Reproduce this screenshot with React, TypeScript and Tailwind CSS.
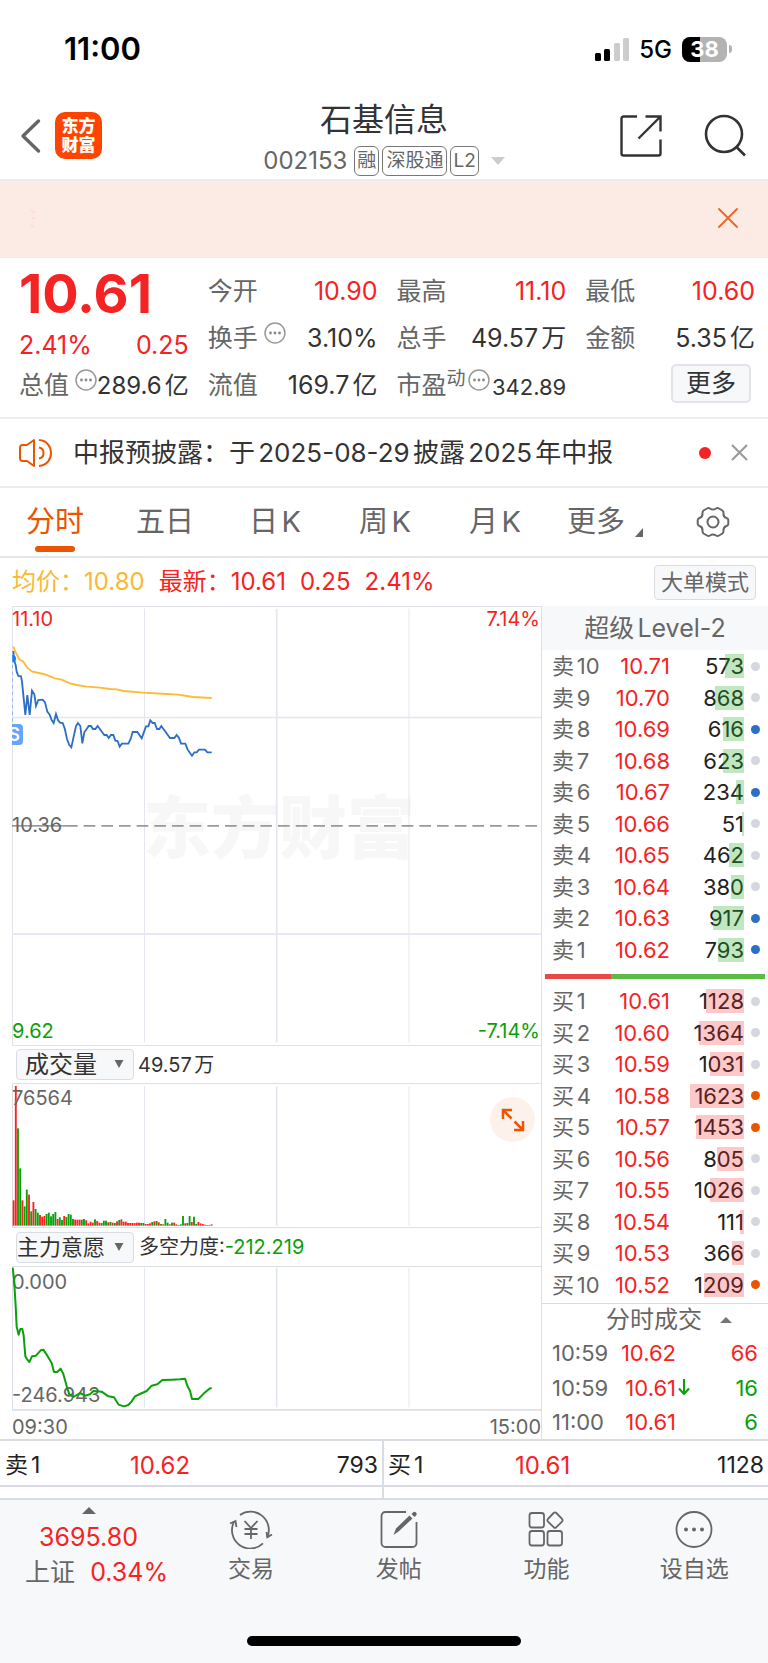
import type { ReactNode } from "react";

type Level = { name: string; price: string; volume: number; dot: string };

const GRAY_DOT = "bg-[#d4d7dd]";
const BLUE_DOT = "bg-[#2c6fc4]";
const ORANGE_DOT = "bg-[#eb5500]";

const sells: Level[] = [
  { name: "卖10", price: "10.71", volume: 573, dot: GRAY_DOT },
  { name: "卖9", price: "10.70", volume: 868, dot: GRAY_DOT },
  { name: "卖8", price: "10.69", volume: 616, dot: BLUE_DOT },
  { name: "卖7", price: "10.68", volume: 623, dot: GRAY_DOT },
  { name: "卖6", price: "10.67", volume: 234, dot: BLUE_DOT },
  { name: "卖5", price: "10.66", volume: 51, dot: GRAY_DOT },
  { name: "卖4", price: "10.65", volume: 462, dot: GRAY_DOT },
  { name: "卖3", price: "10.64", volume: 380, dot: GRAY_DOT },
  { name: "卖2", price: "10.63", volume: 917, dot: BLUE_DOT },
  { name: "卖1", price: "10.62", volume: 793, dot: BLUE_DOT },
];

const buys: Level[] = [
  { name: "买1", price: "10.61", volume: 1128, dot: GRAY_DOT },
  { name: "买2", price: "10.60", volume: 1364, dot: GRAY_DOT },
  { name: "买3", price: "10.59", volume: 1031, dot: GRAY_DOT },
  { name: "买4", price: "10.58", volume: 1623, dot: ORANGE_DOT },
  { name: "买5", price: "10.57", volume: 1453, dot: ORANGE_DOT },
  { name: "买6", price: "10.56", volume: 805, dot: GRAY_DOT },
  { name: "买7", price: "10.55", volume: 1026, dot: GRAY_DOT },
  { name: "买8", price: "10.54", volume: 111, dot: GRAY_DOT },
  { name: "买9", price: "10.53", volume: 366, dot: GRAY_DOT },
  { name: "买10", price: "10.52", volume: 1209, dot: ORANGE_DOT },
];

// Chart series, three units to a pixel
const avgLine =
  "40,485 46,500 57,522 70,530 82,548 95,559 130,567 145,572 165,580 185,584 210,595 230,600 260,605 300,608 330,612 350,613 370,618 430,623 500,627 535,629 560,633 580,636 635,639";
const priceLine =
  "40,498 42,525 47,540 50,560 55,573 63,574 66,590 71,640 76,690 82,630 89,690 96,617 103,628 108,663 115,645 128,644 135,652 142,680 149,689 155,705 161,714 168,687 174,705 180,713 188,714 194,730 201,762 208,780 214,787 221,755 228,723 234,714 241,723 247,775 253,742 260,732 266,723 273,723 279,732 286,732 293,723 306,741 313,750 320,750 326,759 333,750 340,750 346,767 353,768 359,785 366,776 385,776 392,762 398,741 412,741 425,760 438,724 445,724 451,706 458,714 464,714 471,732 478,732 484,723 497,741 510,759 523,759 530,750 537,759 543,776 556,776 563,794 576,812 583,802 590,802 597,794 615,794 622,802 635,802";
const forceLine =
  "38,686 42,720 47,800 50,863 56,887 61,870 67,870 71,890 76,952 82,962 88,969 96,952 108,950 122,934 130,932 142,950 155,972 162,999 172,999 182,989 190,1005 201,1045 208,1066 220,1074 240,1062 255,1070 270,1066 280,1056 305,1058 325,1072 342,1075 356,1097 372,1102 385,1098 395,1087 405,1072 420,1065 440,1056 455,1040 472,1036 487,1023 515,1022 540,1021 555,1019 562,1040 570,1055 576,1080 595,1080 612,1063 628,1049 635,1047";

// Minute volumes: bar height plus colour (r = up, g = down)
const volumeBars =
  "76r 419r 292g 172g 76r 58g 108g 93r 43g 71r 50g 39g 32r 27r 29r 35g 39g 28g 35g 41g 20r 25g 17g 29r 26g 35g 33g 20g 18r 18r 18r 18g 20g 16r 7r 12r 9r 19g 14r 9r 8g 15g 15g 10r 11g 9r 8g 13r 17g 19r 12r 12r 8r 8r 8r 8r 9r 9r 8g 8g 5r 5r 7r 11g 13r 14g 10r 5g 4r 20g 9g 4r 9g 9r 4r 2r 4g 29g 7r 8g 29g 11r 27g 5g 11r 7r 5r 3r 2r 2r 4r"
    .split(" ")
    .map((s) => ({ height: parseInt(s), up: s.endsWith("r") }));

const tabs = ["分时", "五日", "日K", "周K", "月K"];

function MoreDots({ className = "" }: { className?: string }) {
  return (
    <svg viewBox="0 0 22 22" className={`h-[22px] w-[22px] shrink-0 ${className}`} fill="none" stroke="#999" strokeWidth="1.5">
      <circle cx="11" cy="11" r="10" />
      <g fill="#888" stroke="none">
        <circle cx="6.5" cy="11" r="1.4" />
        <circle cx="11" cy="11" r="1.4" />
        <circle cx="15.5" cy="11" r="1.4" />
      </g>
    </svg>
  );
}

function Stat({ label, value, red = false, extra }: { label: string; value: string; red?: boolean; extra?: ReactNode }) {
  return (
    <div className="flex items-center">
      <dt className="flex items-center whitespace-nowrap text-[25px] text-[#666]">
        {label}
        {extra}
      </dt>
      <dd className={`ml-auto whitespace-nowrap text-[25px] ${red ? "text-[#f52323]" : "text-[#333]"}`}>{value}</dd>
    </div>
  );
}

function LevelTable({ levels, side }: { levels: Level[]; side: string }) {
  return (
    <table className="w-full border-collapse text-[22px] leading-6">
      <tbody>
        {levels.map((l) => (
          <tr key={l.name} className="odd:h-8 even:h-[31px]">
            <td className="p-0 pl-[10px] text-[#666]">{l.name}</td>
            <td className="w-[58px] p-0 text-right text-[#f52323]">{l.price}</td>
            <td className="w-[74px] p-0 text-right text-[#222]">
              <span className="relative inline-block h-6">
                {l.volume}
                <span
                  className={`absolute right-0 top-0 h-6 ${side === "sell" ? "bg-[#2daf2d]/30" : "bg-[#f52323]/25"}`}
                  style={{ width: Math.round(l.volume / 30) }}
                />
              </span>
            </td>
            <td className="w-6 p-0 pl-[7px]">
              <span className={`block h-[9px] w-[9px] rounded-full ${l.dot}`} />
            </td>
          </tr>
        ))}
      </tbody>
    </table>
  );
}

function VerticalGrid({ top, bottom }: { top: number; bottom: number }) {
  return (
    <g stroke="#e3e6ee">
      <path d={`M433.5 ${top}V${bottom}M1227 ${top}V${bottom}`} strokeWidth="3" />
      <path d={`M830 ${top}V${bottom}`} strokeWidth="5" />
    </g>
  );
}

function IndicatorSelect({ id, label, className }: { id: string; label: string; className: string }) {
  return (
    <div className="relative">
      <select
        id={id}
        aria-label={label}
        className={`block h-[31px] w-[118px] appearance-none rounded border border-[#d9dce2] bg-[#f7f8fa] text-[#333] ${className}`}
      >
        <option>{label}</option>
      </select>
      <svg viewBox="0 0 10 9" className="pointer-events-none absolute right-[10px] top-[11px] h-2 w-[10px]" fill="#666">
        <path d="M0 0h10L5 9z" />
      </svg>
    </div>
  );
}

function NavItem({ label, children }: { label: string; children: ReactNode }) {
  return (
    <button className="flex flex-col items-center pt-[9px] text-[23px] leading-8 text-[#666]">
      <svg viewBox="0 0 44 40" className="mb-1 h-10 w-11" fill="none" stroke="#666" strokeWidth="1.8">
        {children}
      </svg>
      {label}
    </button>
  );
}

export default function App() {
  return (
    <div className="min-h-screen overflow-hidden bg-white font-[Inter,'Noto_Sans_CJK_SC',sans-serif] text-[#333] [text-autospace:normal]">
      {/* Status bar */}
      <div className="flex h-[98px] items-center pl-16 pr-9">
        <span className="text-[31px] font-semibold text-black">11:00</span>
        <svg viewBox="0 0 34 23" className="ml-auto h-[23px] w-[34px]">
          <rect x="0" y="15" width="6" height="8" rx="1.5" />
          <rect x="9" y="11" width="6" height="12" rx="1.5" />
          <rect x="19" y="5" width="6" height="18" rx="1.5" fill="#ccc" />
          <rect x="28" y="0" width="6" height="23" rx="1.5" fill="#ccc" />
        </svg>
        <span className="ml-[10px] pt-[2px] text-[24px] font-medium text-black">5G</span>
        <div className="relative ml-[10px] flex h-[25px] w-[45px] items-center justify-center overflow-hidden rounded-lg bg-[#b3b3b3]">
          <span className="absolute inset-y-0 left-0 w-[18px] bg-black" />
          <span className="relative text-[22px] font-bold text-white">38</span>
        </div>
        <span className="ml-[2px] h-2 w-[3px] rounded-r-full bg-[#b3b3b3]" />
      </div>

      {/* Header */}
      <header className="grid h-[83px] grid-cols-[1fr_auto_1fr] border-b-2 border-[#ececf0]">
        <div className="flex items-start pl-5 pt-[14px]">
          <button aria-label="返回" className="pt-[6px]">
            <svg viewBox="0 0 22 36" className="h-9 w-[22px]" fill="none" stroke="#666" strokeWidth="3.4" strokeLinecap="round" strokeLinejoin="round">
              <path d="M18.500 3L3 18l15.500 15" />
            </svg>
          </button>
          <div className="ml-[13px] flex h-[47px] w-[47px] flex-col items-center justify-center rounded-[10px] bg-[#ff4400] text-[17px] font-black leading-[19px] text-white">
            <span>东方</span>
            <span>财富</span>
          </div>
        </div>
        <div className="flex flex-col items-center">
          <h1 className="text-[32px] leading-[44px]">石基信息</h1>
          <div className="mt-1 flex items-center gap-[3px] text-[19px] text-[#666]">
            <span className="mr-1 text-[24px] leading-[30px]">002153</span>
            <span className="flex h-[30px] items-center rounded-md border border-[#777] px-[2px]">融</span>
            <span className="flex h-[30px] items-center rounded-md border border-[#777] px-[3px]">深股通</span>
            <span className="flex h-[30px] items-center rounded-md border border-[#777] px-[2px]">L2</span>
            <svg viewBox="0 0 14 8" className="ml-[9px] h-2 w-[14px]" fill="#ccc">
              <path d="M0 0h14L7 8z" />
            </svg>
          </div>
        </div>
        <div className="flex items-start justify-end gap-10 pr-[21px] pt-4">
          <button aria-label="分享">
            <svg viewBox="0 0 44 44" className="h-11 w-11" fill="none" stroke="#333" strokeWidth="2.400">
              <path d="M18 2.500H4.500a2 2 0 0 0-2 2v35a2 2 0 0 0 2 2h35a2 2 0 0 0 2-2V25.500" />
              <path d="M26.500 2.500h15v15M41 3L19.500 24.500" />
            </svg>
          </button>
          <button aria-label="搜索">
            <svg viewBox="0 0 44 44" className="h-11 w-11" fill="none" stroke="#333" strokeWidth="2.600">
              <circle cx="21" cy="20" r="18" />
              <path d="M33 32.500l9 9" />
            </svg>
          </button>
        </div>
      </header>

      {/* Banner */}
      <div className="flex h-[77px] items-center justify-between bg-[#fcebe5] pb-[3px] pl-[30px] pr-[30px]">
        <svg viewBox="0 0 6 20" className="h-5 w-[6px]" fill="none" stroke="#fadccb" strokeWidth="1.500">
          <path d="M1 2l4 3M2 10h3M1 17l2 2" />
        </svg>
        <button aria-label="关闭横幅">
          <svg viewBox="0 0 20 20" className="h-5 w-5" fill="none" stroke="#f06420" strokeWidth="1.800" strokeLinecap="round">
            <path d="M1 1l18 18M19 1L1 19" />
          </svg>
        </button>
      </div>

      {/* Quote */}
      <section className="grid h-[161px] grid-cols-4 gap-x-[19px] border-b-2 border-[#ececf0] pl-[19px] pr-[13px]">
        <div className="flex min-w-0 flex-col pt-3">
          <strong className="text-[54px] font-bold leading-[48px] text-[#f52323]">10.61</strong>
          <div className="mt-3 flex justify-between text-[25px] leading-[30px] text-[#f52323]">
            <span>2.41%</span>
            <span>0.25</span>
          </div>
          <div className="mt-[2px] flex h-12 items-center justify-between whitespace-nowrap">
            <span className="text-[25px] text-[#666]">总值</span>
            <span className="flex items-center text-[24px]">
              <MoreDots className="mb-3" />
              289.6亿
            </span>
          </div>
        </div>
        <dl className="grid grid-rows-3 pb-2 pt-[10px]">
          <Stat label="今开" value="10.90" red />
          <Stat label="换手" value="3.10%" extra={<MoreDots className="mb-3 ml-[6px]" />} />
          <Stat label="流值" value="169.7亿" />
        </dl>
        <dl className="grid grid-rows-3 pb-2 pt-[10px]">
          <Stat label="最高" value="11.10" red />
          <Stat label="总手" value="49.57万" />
          <div className="flex items-center">
            <dt className="flex items-center text-[25px] text-[#666]">
              市盈
              <span className="mb-3 text-[19px]">动</span>
              <MoreDots className="mb-3 ml-[2px]" />
            </dt>
            <dd className="ml-auto pt-1 text-[22px]">342.89</dd>
          </div>
        </dl>
        <div className="grid grid-rows-3 pb-2 pt-[10px]">
          <dl className="row-span-2 grid grid-rows-2">
            <Stat label="最低" value="10.60" red />
            <Stat label="金额" value="5.35亿" />
          </dl>
          <button className="mb-1 mr-1 flex h-[39px] w-20 items-center justify-center self-center justify-self-end rounded-[5px] border-2 border-[#e2e4ea] bg-[#f7f8fa] pb-[2px] text-[25px] leading-8">
            更多
          </button>
        </div>
      </section>

      {/* Notice */}
      <section className="flex h-[69px] items-center border-b-2 border-[#ececf0] pl-[19px] pr-5">
        <svg viewBox="0 0 34 30" className="h-[30px] w-[34px]" fill="none" stroke="#eb5500" strokeWidth="2" strokeLinejoin="round">
          <path d="M15 2L8 7H3.500A2.500 2.500 0 0 0 1 9.500v11A2.500 2.500 0 0 0 3.500 23H8l7 5z" />
          <path d="M20 9.500c6 1 6 10 0 11M20 2c16 1 16 25 0 26" />
        </svg>
        <p className="ml-5 whitespace-nowrap text-[26px]">中报预披露：于2025-08-29披露2025年中报</p>
        <span className="ml-auto h-3 w-3 rounded-full bg-[#f52323]" />
        <button aria-label="关闭公告" className="ml-5">
          <svg viewBox="0 0 17 17" className="h-[17px] w-[17px]" fill="none" stroke="#999" strokeWidth="2">
            <path d="M1 1l15 15M16 1L1 16" />
          </svg>
        </button>
      </section>

      {/* Period tabs */}
      <nav className="flex h-[70px] border-b-2 border-[#e4e5ea] text-[29px] text-[#666]">
        {tabs.map((tab, i) => (
          <button key={tab} className={`relative flex-1 ${i === 0 ? "text-[#eb5500]" : ""}`}>
            {tab}
            {i === 0 && <span className="absolute bottom-1 left-1/2 h-[6px] w-10 -translate-x-1/2 rounded-full bg-[#eb5500]" />}
          </button>
        ))}
        <button className="flex flex-1 items-center justify-center gap-[10px]">
          更多
          <svg viewBox="0 0 8 9" className="mt-5 h-[9px] w-2" fill="#666">
            <path d="M8 0v9H0z" />
          </svg>
        </button>
        <button aria-label="设置" className="flex w-[108px] items-center pl-9">
          <svg viewBox="0 0 34 32" className="h-8 w-[34px]" fill="none" stroke="#666" strokeWidth="2" strokeLinejoin="round">
            <path d="M11 2.500q1.500-1 3 0 3 2.200 6 0 1.500-1 3 0l3.500 2q1.200 1 1 3-.2 3.500 3 4.500 1.800.7 1.800 2.200v3.600q0 1.500-1.800 2.200-3.200 1-3 4.500.2 2-1 3l-3.500 2q-1.500 1-3 0-3-2.200-6 0-1.500 1-3 0l-3.500-2q-1.200-1-1-3 .2-3.500-3-4.500Q1.700 19.300 1.700 17.800v-3.600q0-1.500 1.800-2.200 3.200-1 3-4.500-.2-2 1-3z" />
            <circle cx="17" cy="16" r="5.500" />
          </svg>
        </button>
      </nav>

      {/* Legend */}
      <div className="flex h-12 items-center pl-3 pr-3 text-[24px] text-[#f52323]">
        <span className="text-[#fbb830]">均价：10.80</span>
        <span className="ml-[14px]">最新：10.61</span>
        <span className="ml-[14px]">0.25</span>
        <span className="ml-[14px]">2.41%</span>
        <button className="ml-auto h-[35px] w-[102px] rounded border border-[#d9dce2] bg-[#f7f8fa] text-[22px] leading-8 text-[#666]">
          大单模式
        </button>
      </div>

      <div className="flex border-b-2 border-[#d9dce2]">
        {/* Charts */}
        <main className="min-w-0 flex-1 pl-3">
          <div className="relative h-[440px] text-[20px] leading-6">
            <span className="absolute left-[131px] top-[182px] text-[68px] font-black leading-[80px] text-[#f7f7f7]">东方财富</span>
            <svg viewBox="36 363 1587 1320" preserveAspectRatio="none" className="absolute inset-0 h-full w-full" fill="none">
              <path d="M36 364.500H1623M37.500 363V1683M36 1681.500H1623" stroke="#e0e3ea" strokeWidth="3" />
              <VerticalGrid top={371} bottom={1672} />
              <path d="M36 697.500H1623M36 1347.500H1623" stroke="#e5e6f0" strokeWidth="5" />
              <path d="M36 1022.500H198" stroke="#777" strokeWidth="4" />
              <path d="M198 1022.500H1623" stroke="#999" strokeWidth="5" strokeDasharray="35 18" />
              <path d="M37.500 540V716" stroke="#8fb9f0" strokeWidth="3" strokeDasharray="10 10" />
              <polyline points={avgLine} stroke="#fdbb36" strokeWidth="5.500" />
              <polyline points={priceLine} stroke="#2c6fc4" strokeWidth="5.500" />
              <path d="M37 510a11 11 0 0 1 0 22z" fill="#1677ff" />
            </svg>
            <span className="absolute left-0 top-[118px] flex h-[21px] w-[11px] items-center justify-end overflow-hidden rounded-r bg-[#66a3fa] pr-[3px] text-[18px] font-semibold text-white">
              S
            </span>
            <span className="absolute left-0 top-[1px] text-[#f52323]">11.10</span>
            <span className="absolute right-[1px] top-[1px] text-[#f52323]">7.14%</span>
            <span className="absolute left-0 top-[207px] text-[#666]">10.36</span>
            <span className="absolute bottom-[3px] left-0 text-[#0aa00a]">9.62</span>
            <span className="absolute bottom-[3px] right-[1px] text-[#0aa00a]">-7.14%</span>
          </div>

          <div className="flex h-[37px] items-center pl-1 text-[20px]">
            <IndicatorSelect id="volume" label="成交量" className="pl-2 text-[24px] leading-[28px]" />
            <span className="ml-1">49.57万</span>
          </div>

          <div className="relative h-36 text-[20px] leading-6">
            <svg viewBox="36 129 1587 432" preserveAspectRatio="none" className="absolute inset-0 h-full w-full" fill="none">
              <VerticalGrid top={139} bottom={557} />
              <path d="M36 130.500H1623M37.500 129V561" stroke="#dcdfe6" strokeWidth="3" />
              {volumeBars.map((bar, i) => (
                <rect key={i} x={38 + i * 6.6} y={557 - bar.height} width="5.600" height={bar.height} fill={bar.up ? "#ff2020" : "#0aa00a"} />
              ))}
            </svg>
            <span className="absolute left-0 top-[3px] text-[#666]">76564</span>
            <button aria-label="全屏" className="absolute right-[6px] top-[14px] flex h-[45px] w-[45px] items-center justify-center rounded-full bg-[#fdf1eb]">
              <svg viewBox="0 0 24 24" className="h-6 w-6" fill="none" stroke="#eb5500" strokeWidth="2.500">
                <path d="M11 2H2v9M2 2l8.500 8.500M22 13v9h-9M22 22l-8.500-8.500" />
              </svg>
            </button>
          </div>

          <div className="flex h-10 items-center border-y border-[#dcdfe6] pl-1 text-[20px]">
            <IndicatorSelect id="force" label="主力意愿" className="text-[22px] leading-[28px]" />
            <span className="ml-[5px]">
              多空力度:<span className="text-[#0aa00a]">-212.219</span>
            </span>
          </div>

          <div className="relative h-36 text-[20px] leading-6">
            <span className="absolute left-0 top-[3px] text-[#666]">0.000</span>
            <span className="absolute bottom-1 left-0 text-[#666]">-246.943</span>
            <svg viewBox="36 684 1587 432" preserveAspectRatio="none" className="absolute inset-0 h-full w-full" fill="none">
              <VerticalGrid top={686} bottom={1105} />
              <path d="M37.500 684V1112" stroke="#dcdfe6" strokeWidth="3" />
              <path d="M36 1112.500H1623" stroke="#dcdfe6" strokeWidth="5" />
              <polyline points={forceLine} stroke="#0aa00a" strokeWidth="6" strokeLinejoin="round" />
            </svg>
          </div>

          <div className="flex h-7 items-center justify-between pt-[3px] text-[20px] leading-6 text-[#666]">
            <span>09:30</span>
            <span>15:00</span>
          </div>
        </main>

        {/* Order book */}
        <aside className="w-[227px] border-l border-[#dcdfe6]">
          <h2 className="h-11 bg-[#f7f8fa] text-center text-[25px] leading-[44px] text-[#666]">超级Level-2</h2>
          <LevelTable levels={sells} side="sell" />
          <div className="mx-[3px] mb-[6px] mt-[9px] flex h-[5px] bg-[#5bbb46]">
            <span className="w-[30%] bg-[#e94848]" />
          </div>
          <LevelTable levels={buys} side="buy" />
          <div className="mt-[3px] border-t border-[#d9dce2]">
            <h2 className="flex h-8 items-center justify-center gap-[18px] pl-7 text-[24px] text-[#666]">
              分时成交
              <svg viewBox="0 0 12 6" className="h-[6px] w-3" fill="#777">
                <path d="M0 6h12L6 0z" />
              </svg>
            </h2>
            <table className="w-full border-collapse text-[22px] leading-6">
              <tbody>
                <tr className="h-[34px]">
                  <td className="w-[70px] p-0 pl-[10px] text-[#666]">10:59</td>
                  <td className="w-16 p-0 text-right text-[#f52323]">10.62</td>
                  <td className="p-0 pr-[10px] text-right text-[#f52323]">66</td>
                </tr>
                <tr className="h-[35px]">
                  <td className="w-[70px] p-0 pl-[10px] text-[#666]">10:59</td>
                  <td className="relative p-0 text-right text-[#f52323]">
                    10.61
                    <svg viewBox="0 0 12 16" className="absolute -right-[14px] top-[9px] h-4 w-3" fill="none" stroke="#0aa00a" strokeWidth="2">
                      <path d="M6 0v15M1 9.500l5 5.500 5-5.500" />
                    </svg>
                  </td>
                  <td className="p-0 pr-[10px] text-right text-[#0aa00a]">16</td>
                </tr>
                <tr className="h-[34px]">
                  <td className="w-[70px] p-0 pl-[10px] text-[#666]">11:00</td>
                  <td className="p-0 text-right text-[#f52323]">10.61</td>
                  <td className="p-0 pr-[10px] text-right text-[#0aa00a]">6</td>
                </tr>
              </tbody>
            </table>
          </div>
        </aside>
      </div>

      {/* Best sell / buy */}
      <div className="grid grid-cols-2 divide-x-2 divide-[#d9dce2] border-b-2 border-[#d9dce2] text-[23px] text-[#222]">
        <div>
          <div className="flex h-[46px] items-center border-b-2 border-[#d9dce2] pl-[5px] pr-1 pt-[5px]">
            <span className="w-[125px]">卖1</span>
            <span className="text-[24px] text-[#f52323]">10.62</span>
            <span className="ml-auto">793</span>
          </div>
          <div className="h-[11px]" />
        </div>
        <div>
          <div className="flex h-[46px] items-center border-b-2 border-[#d9dce2] pl-1 pr-1 pt-[5px]">
            <span className="w-[127px]">买1</span>
            <span className="text-[24px] text-[#f52323]">10.61</span>
            <span className="ml-auto">1128</span>
          </div>
          <div className="h-[11px]" />
        </div>
      </div>

      {/* Bottom navigation */}
      <footer className="bg-[#f7f8fa]">
        <div className="grid h-[136px] grid-cols-[177px_repeat(4,1fr)] items-start">
          <button className="flex flex-col items-center pt-[7px] text-[25px] leading-[35px] text-[#f52323]">
            <svg viewBox="0 0 14 7" className="mb-[6px] h-[7px] w-[14px]" fill="#666">
              <path d="M0 7h14L7 0z" />
            </svg>
            <span>3695.80</span>
            <span className="whitespace-nowrap pl-4">
              <span className="mr-3 text-[#666]">上证</span>0.34%
            </span>
          </button>
          <NavItem label="交易">
            <path d="M11 6A18.300 18.300 0 0 1 38.500 27.800" />
            <path d="M43 25.500L38.300 28.300 37.500 23" />
            <path d="M34 34.400A18.300 18.300 0 0 1 5 12.900" />
            <path d="M1 14.500L6.500 12 7.500 18" />
            <path d="M15.500 12l6.500 7 6.500-7M22 19v11M15.500 20h13M15.500 25h13" />
          </NavItem>
          <NavItem label="发帖">
            <path d="M29 3H8.500A4 4 0 0 0 4.500 7v27a4 4 0 0 0 4 4h27a4 4 0 0 0 4-4V13" />
            <path d="M16.500 26l2.500-6.500L32.500 6.500l3 3L21.500 22.500zM34.500 5l2-2q1.500-.5 2.500.5t.500 2.500l-2 2z" fill="#666" stroke="none" />
          </NavItem>
          <NavItem label="功能">
            <rect x="5.500" y="4" width="14.500" height="14.500" rx="2.500" />
            <rect x="5.500" y="22" width="14.500" height="14.500" rx="2.500" />
            <rect x="23.500" y="22" width="14.500" height="14.500" rx="2.500" />
            <path d="M29.600 4q1.400-1.200 2.800 0l5.600 5.800q1.200 1.400 0 2.800l-5.600 5.600q-1.400 1.200-2.800 0L24 12.600q-1.200-1.400 0-2.800z" />
          </NavItem>
          <NavItem label="设自选">
            <circle cx="22" cy="20.500" r="17.500" />
            <g fill="#666" stroke="none">
              <circle cx="14" cy="20.500" r="2" />
              <circle cx="22" cy="20.500" r="2" />
              <circle cx="30" cy="20.500" r="2" />
            </g>
          </NavItem>
        </div>
        <div className="mx-auto h-[10px] w-[274px] rounded-full bg-black" />
        <div className="h-[17px]" />
      </footer>
    </div>
  );
}
